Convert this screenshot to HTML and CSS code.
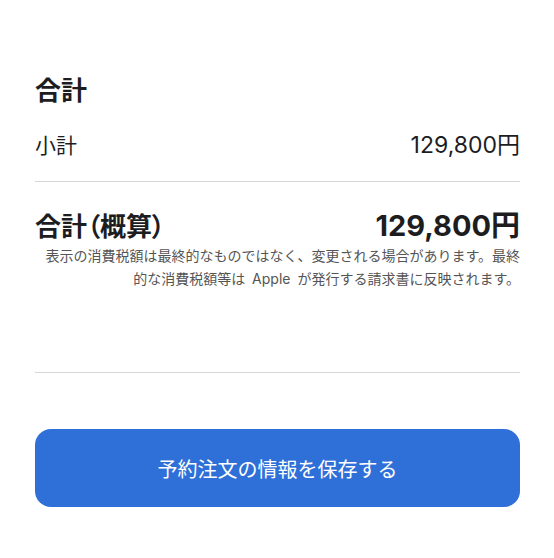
FILE: index.html
```html
<!DOCTYPE html>
<html lang="ja">
<head>
<meta charset="utf-8">
<link rel="stylesheet" href="styles.css">
</head>
<body>
<main class="summary">
  <h2 class="title">合計</h2>
  <div class="row subtotal">
    <span class="label">小計</span>
    <span class="value">129,800円</span>
  </div>
  <hr class="divider">
  <div class="row total">
    <span class="label">合計（概算）</span>
    <span class="value">129,800円</span>
  </div>
  <p class="note">表示の消費税額は最終的なものではなく、変更される場合があります。最終的な消費税額等は Apple が発行する請求書に反映されます。</p>
  <hr class="divider divider-bottom">
  <button class="save" type="button">予約注文の情報を保存する</button>
</main>
</body>
</html>
```
FILE: styles.css
```css
html, body {
  margin: 0;
  padding: 0;
  background: #ffffff;
}
body {
  font-family: "Inter", "Noto Sans CJK JP", "Noto Sans", sans-serif;
  color: #1d1d1f;
}
.summary {
  width: 485px;
  margin-left: 35px;
  padding-top: 74px;
  display: flex;
  flex-direction: column;
}
.title {
  margin: 0;
  font-size: 26px;
  font-weight: 700;
  line-height: 34px;
}
.row {
  display: flex;
  justify-content: space-between;
  align-items: baseline;
}
.subtotal {
  margin-top: 22px;
  font-size: 21px;
  line-height: 30px;
}
.subtotal .value {
  font-size: 23px;
}
.divider {
  border: 0;
  border-top: 1px solid #d6d6d6;
  margin: 20px 0 0 0;
  height: 0;
}
.total {
  margin-top: 27px;
  font-size: 26px;
  font-weight: 700;
  line-height: 34px;
}
.total .label {
  font-feature-settings: "palt";
}
.total .value {
  font-size: 29px;
}
.note {
  margin: 0;
  font-size: 14px;
  line-height: 23px;
  color: #555555;
  text-align: right;
  word-spacing: 3px;
}
.divider-bottom {
  margin-top: 82px;
}
.save {
  margin-top: 56px;
  height: 78px;
  border: 0;
  border-radius: 16px;
  background: #2f6fd8;
  color: #ffffff;
  font-family: inherit;
  font-size: 20px;
  cursor: pointer;
}
```
